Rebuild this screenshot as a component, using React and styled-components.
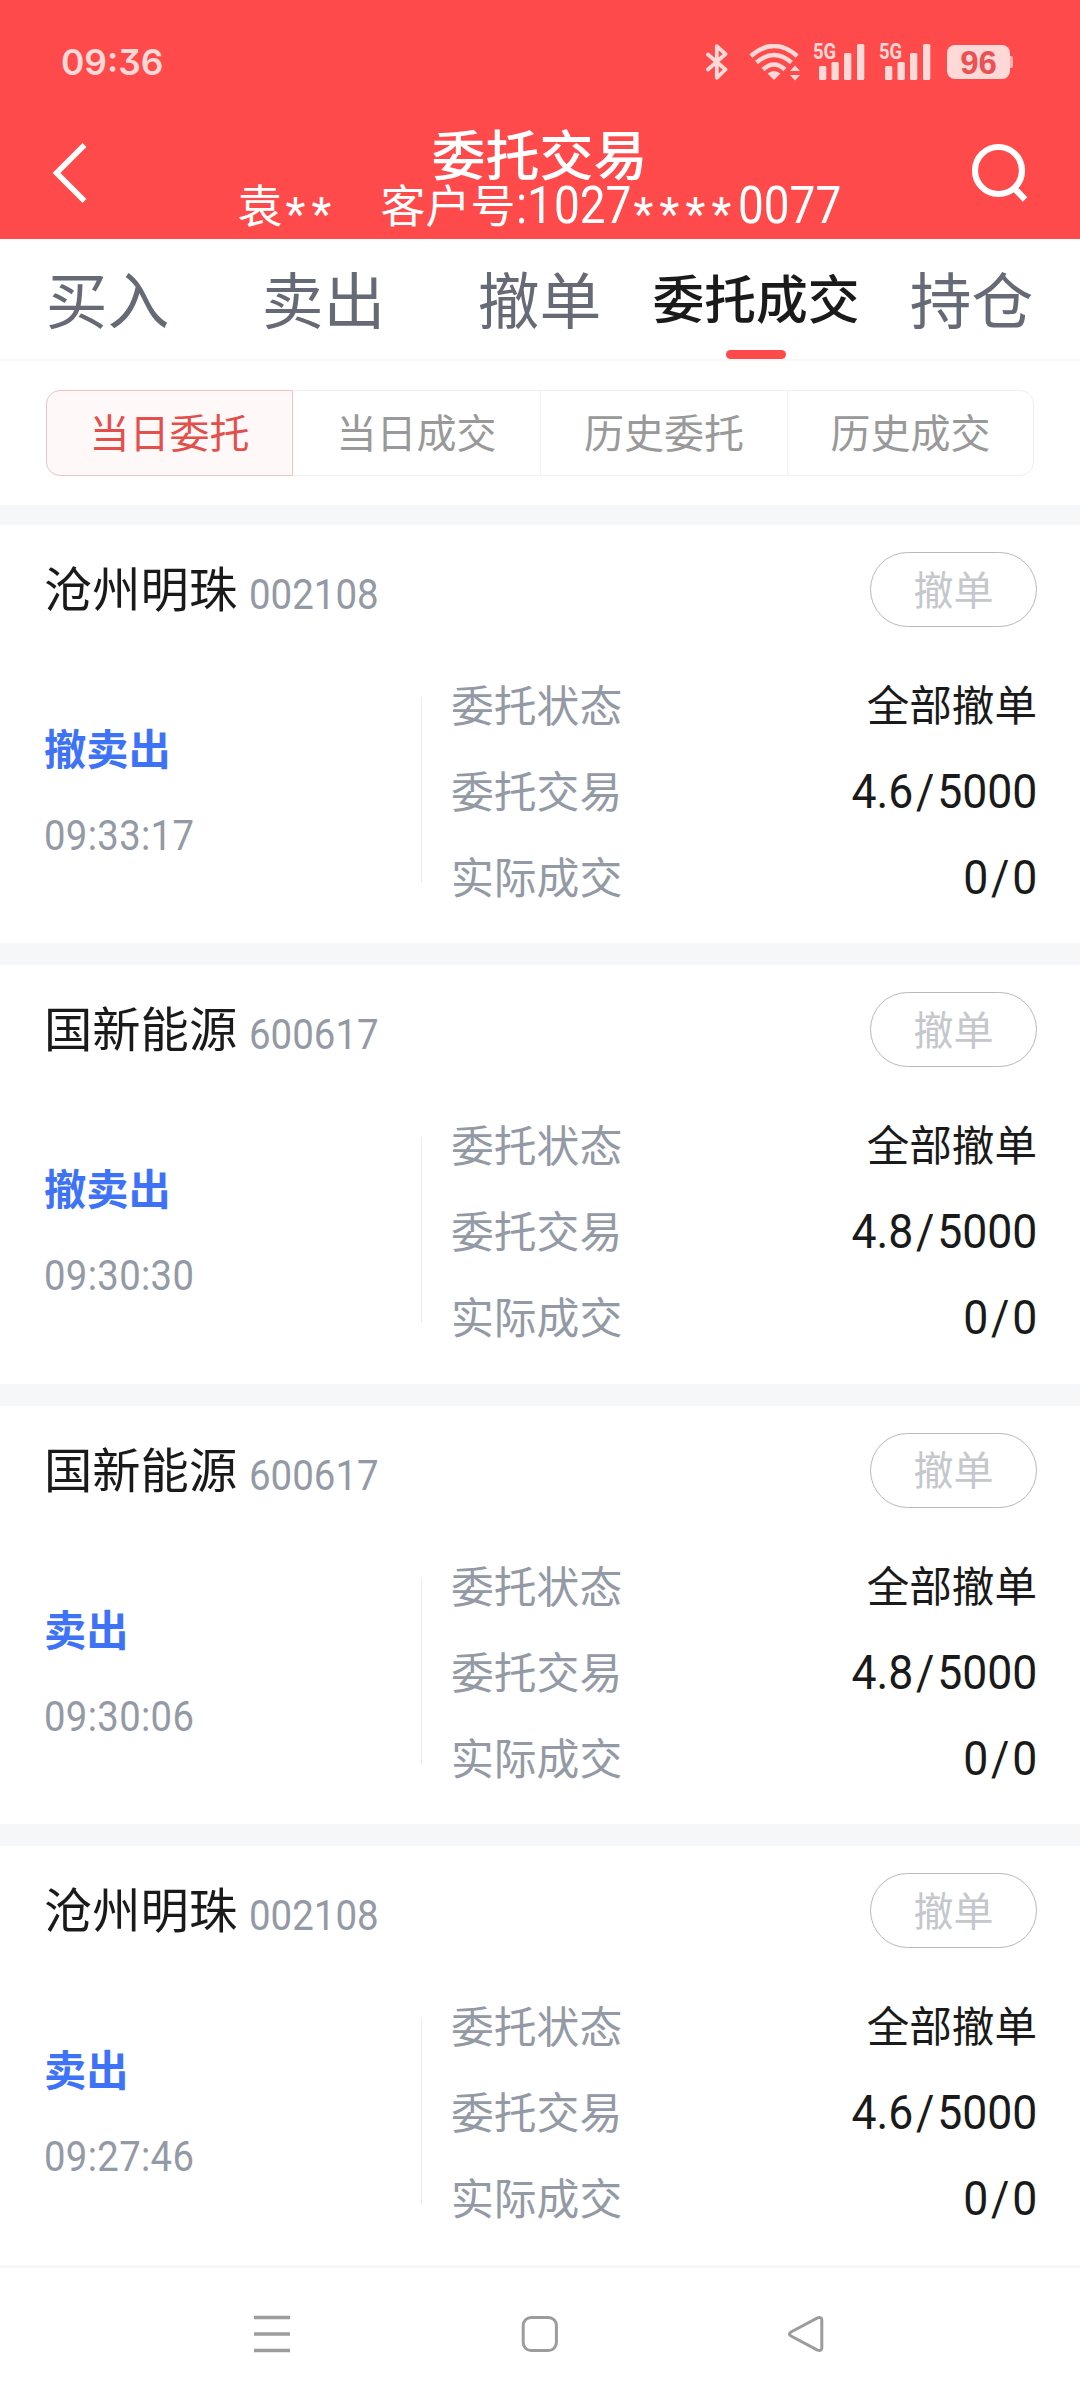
import React from "react";
import styled, { createGlobalStyle } from "styled-components";

const tabs = ["买入", "卖出", "撤单", "委托成交", "持仓"];
const segments = ["当日委托", "当日成交", "历史委托", "历史成交"];
const orders = [
  { id: 1, name: "沧州明珠", code: "002108", side: "撤卖出", time: "09:33:17", status: "全部撤单", order: "4.6/5000", deal: "0/0" },
  { id: 2, name: "国新能源", code: "600617", side: "撤卖出", time: "09:30:30", status: "全部撤单", order: "4.8/5000", deal: "0/0" },
  { id: 3, name: "国新能源", code: "600617", side: "卖出", time: "09:30:06", status: "全部撤单", order: "4.8/5000", deal: "0/0" },
  { id: 4, name: "沧州明珠", code: "002108", side: "卖出", time: "09:27:46", status: "全部撤单", order: "4.6/5000", deal: "0/0" },
];

const SignalIcon = () => (
  <Signal>
    <SignalLabel>5G</SignalLabel>
    <svg width="46" height="36" viewBox="0 0 46 36" fill="currentColor">
      <rect x="0" y="22" width="7.3" height="14" rx="1.5" />
      <rect x="12.5" y="18" width="7.3" height="18" rx="1.5" />
      <rect x="25" y="9" width="7.3" height="27" rx="1.5" />
      <rect x="38" y="0" width="7.3" height="36" rx="1.5" />
    </svg>
  </Signal>
);

const StatusBar = () => (
  <Status>
    <Clock>09:36</Clock>
    <StatusIcons>
      <svg width="22" height="36" viewBox="0 0 22 36" fill="none" stroke="currentColor" strokeWidth="3.8" strokeLinejoin="round" strokeLinecap="round">
        <path d="M2 10.5 L19.5 25.5 L10.8 33.8 V2.2 L19.5 10 L2 25.5" />
      </svg>
      <WifiIcon width="52" height="37" viewBox="0 0 52 37" fill="none" stroke="currentColor" strokeWidth="4.5">
        <path d="M1.8 12 Q25 -8 48.2 12" />
        <path d="M7.5 18.5 Q25 3.5 42.5 18.5" />
        <path d="M14 25.5 Q25 15.5 36 25.5" />
        <path d="M18.5 29.5 Q25 24.5 31.5 29.5 L25 36 Z" fill="currentColor" stroke="none" />
        <path d="M41 27 L46 21.5 L51 27 Z M41 31 L46 36.5 L51 31 Z" fill="currentColor" stroke="none" />
      </WifiIcon>
      <SignalIcon />
      <SignalIcon />
      <Battery>
        <BatteryBody>96</BatteryBody>
        <BatteryTip />
      </Battery>
    </StatusIcons>
  </Status>
);

const PriceAmount = ({ value }) => {
  const [left, right] = value.split("/");
  return (
    <NumberValue>
      {left}
      <Slash>/</Slash>
      {right}
    </NumberValue>
  );
};

const Order = ({ order }) => (
  <Card>
    <CardHead>
      <StockName>{order.name}</StockName>
      <StockCode>{order.code}</StockCode>
      <CancelButton>撤单</CancelButton>
    </CardHead>
    <CardBody>
      <Side>
        <SideName>{order.side}</SideName>
        <SideTime>{order.time}</SideTime>
      </Side>
      <Details>
        <DetailRow>
          <Label>委托状态</Label>
          <Value>{order.status}</Value>
        </DetailRow>
        <DetailRow>
          <Label>委托交易</Label>
          <PriceAmount value={order.order} />
        </DetailRow>
        <DetailRow>
          <Label>实际成交</Label>
          <PriceAmount value={order.deal} />
        </DetailRow>
      </Details>
    </CardBody>
  </Card>
);

const App = () => {
  return (
    <Page>
      <GlobalStyle />
      <Header>
        <StatusBar />
        <NavBar>
          <svg width="40" height="60" viewBox="0 0 40 60" fill="none" stroke="#fff" strokeWidth="5.5">
            <path d="M34.5 2 L6.5 30 L34.5 58" />
          </svg>
          <Titles>
            <Title>委托交易</Title>
            <Account>
              <AccountName>袁</AccountName>
              <Stars>**</Stars>
              <AccountLabel>客户号</AccountLabel>
              <Digits $width={38}>:1</Digits>
              <Digits $width={80}>027</Digits>
              <Stars>****</Stars>
              <Digits $width={104}>0077</Digits>
            </Account>
          </Titles>
          <svg width="58" height="60" viewBox="0 0 58 60" fill="none" stroke="#fff" strokeWidth="6.2">
            <circle cx="27.5" cy="27.5" r="23.5" />
            <path d="M43 45 L54 56.5" />
          </svg>
        </NavBar>
      </Header>
      <Tabs>
        {tabs.map((tab) => (
          <Tab key={tab} $active={tab === "委托成交"}>
            {tab}
          </Tab>
        ))}
      </Tabs>
      <SegmentBar>
        {segments.map((segment, index) => (
          <Segment key={segment} $active={index === 0}>
            {segment}
          </Segment>
        ))}
      </SegmentBar>
      <Orders>
        {orders.map((order) => (
          <Order key={order.id} order={order} />
        ))}
      </Orders>
      <SystemNav>
        <svg width="36" height="38" viewBox="0 0 36 38" stroke="#9c9c9c" strokeWidth="3.4">
          <path d="M0 2.5 H36 M0 19 H36 M0 35.5 H36" />
        </svg>
        <svg width="38" height="38" viewBox="0 0 38 38" fill="none" stroke="#9c9c9c" strokeWidth="3">
          <rect x="3.2" y="2.4" width="33.2" height="33.2" rx="8" />
        </svg>
        <svg width="38" height="38" viewBox="0 0 38 38" fill="none" stroke="#9c9c9c" strokeWidth="3" strokeLinejoin="round">
          <path d="M4 17 L30.5 2.9 Q34.8 1.6 34.8 5 V33 Q34.8 36.4 30.5 35.1 L4 21 Q1 19 4 17 Z" />
        </svg>
      </SystemNav>
    </Page>
  );
};

export default App;

const GlobalStyle = createGlobalStyle`
  body {
    margin: 0;
    background: #fff;
  }
  * {
    box-sizing: border-box;
  }
  svg {
    display: block;
    flex: none;
  }
`;

const Page = styled.div`
  width: 1080px;
  height: 2400px;
  display: flex;
  flex-direction: column;
  overflow: hidden;
  background: #fff;
  font-family: "Noto Sans CJK SC", sans-serif;
  font-weight: 400;
  white-space: nowrap;
`;

const Header = styled.header`
  height: 239px;
  flex: none;
  background: #ff4a4b;
  color: #fff;
`;

const Status = styled.div`
  height: 124px;
  padding: 0 67px 0 61px;
  display: flex;
  align-items: center;
  justify-content: space-between;
  color: #ffd8d8;
`;
const Clock = styled.div`
  font-family: Inter, sans-serif;
  font-feature-settings: "cv09";
  font-size: 35.4px;
  font-weight: 600;
`;
const StatusIcons = styled.div`
  display: flex;
  align-items: center;
`;
const WifiIcon = styled.svg`
  margin-left: 21px;
  margin-right: 12px;
`;
const Signal = styled.div`
  position: relative;
  width: 52px;
  margin-right: 14px;
  padding-left: 6px;
`;
const SignalLabel = styled.span`
  position: absolute;
  left: 0;
  top: -2px;
  font-family: Roboto, sans-serif;
  font-size: 22px;
  font-weight: 700;
  line-height: 20px;
  transform: scaleX(0.84);
  transform-origin: left;
`;
const Battery = styled.div`
  display: flex;
  align-items: center;
  margin-left: 2px;
`;
const BatteryBody = styled.div`
  width: 63px;
  height: 34px;
  border-radius: 8px;
  background: #ffd8d8;
  color: #ea5152;
  font-family: "Liberation Sans", sans-serif;
  font-size: 33px;
  font-weight: 700;
  line-height: 36px;
  text-align: center;
`;
const BatteryTip = styled.div`
  width: 3px;
  height: 12px;
  border-radius: 0 2px 2px 0;
  background: #ffb0b0;
`;

const NavBar = styled.div`
  height: 115px;
  padding: 0 51px 0 50px;
  display: flex;
  justify-content: space-between;
  align-items: flex-start;

  > svg {
    margin-top: 19px;
  }
`;
const Titles = styled.div`
  display: flex;
  flex-direction: column;
  align-items: center;
  padding-left: 18px;
`;
const Title = styled.h1`
  margin: 0;
  font-size: 54px;
  font-weight: 500;
  line-height: 57px;
`;
const Account = styled.div`
  height: 46px;
  display: flex;
  align-items: center;
  font-size: 45px;
  line-height: 46px;
`;
const AccountName = styled.span`
  margin-right: 3px;
  padding-bottom: 1px;
`;
const AccountLabel = styled.span`
  margin-left: 43px;
  padding-bottom: 1px;
`;
const Digits = styled.span`
  width: ${(props) => props.$width}px;
  padding-top: 3px;
  font-family: Roboto, sans-serif;
  font-size: 51px;
  transform: scaleX(0.9);
  transform-origin: left;
`;
const Stars = styled.span`
  font-family: Roboto, sans-serif;
  font-size: 46px;
  letter-spacing: 6.2px;
  padding-top: 19px;
`;

const Tabs = styled.nav`
  height: 122px;
  flex: none;
  display: grid;
  grid-template-columns: repeat(5, 1fr);
  border-bottom: 2px solid #f6f7f9;
`;
const Tab = styled.div`
  position: relative;
  padding-right: ${(props) => (props.$active ? "0" : "1px")};
  text-align: center;
  line-height: 116px;
  font-size: ${(props) => (props.$active ? "51.8px" : "61.8px")};
  font-weight: ${(props) => (props.$active ? 500 : 400)};
  color: ${(props) => (props.$active ? "#1a1a1a" : "#666a76")};

  &::after {
    content: "";
    display: ${(props) => (props.$active ? "block" : "none")};
    position: absolute;
    bottom: 0;
    left: 78px;
    width: 60px;
    height: 9px;
    border-radius: 5px;
    background: #ff4a4b;
  }
`;

const SegmentBar = styled.div`
  height: 144px;
  flex: none;
  padding: 29px 46px 0;
  display: grid;
  grid-template-columns: repeat(4, 1fr);
`;
const Segment = styled.div`
  height: 86px;
  border: 1px solid ${(props) => (props.$active ? "#edc4c6" : "#edeff1")};
  border-right-width: ${(props) => (props.$active ? "1px" : "0")};
  background: ${(props) => (props.$active ? "#fff8f8" : "#fff")};
  color: ${(props) => (props.$active ? "#e34f4b" : "#999")};
  font-size: 40px;
  line-height: 80px;
  text-align: center;

  &:first-child {
    border-radius: 14px 0 0 14px;
  }
  &:nth-child(2) {
    border-left-width: 0;
  }
  &:last-child {
    border-right-width: 1px;
    border-radius: 0 14px 14px 0;
  }
`;

const Orders = styled.main`
  height: 1760px;
  flex: none;
  overflow: hidden;
`;
const Card = styled.section`
  height: 440.4px;
  padding: 26px 43px 0 44px;
  border-top: 22px solid #f6f7f9;

  &:first-child {
    height: 438.4px;
    border-top-width: 20px;
  }
`;
const CardHead = styled.div`
  height: 77px;
  display: flex;
  align-items: center;
`;
const StockName = styled.div`
  padding-bottom: 6px;
  font-size: 48.3px;
  line-height: 69px;
  color: #1a1a1a;
`;
const StockCode = styled.div`
  margin: 10px 0 0 12px;
  font-family: Roboto, sans-serif;
  font-size: 42px;
  color: #949aa5;
  transform: scaleX(0.915);
  transform-origin: left;
`;
const CancelButton = styled.button`
  width: 167px;
  height: 75px;
  margin-left: auto;
  padding: 0 0 4px;
  border: 1px solid #b8b9bd;
  border-radius: 38px;
  background: none;
  color: #c5c7cd;
  font-family: inherit;
  font-size: 40px;
  line-height: 66px;
`;
const CardBody = styled.div`
  margin-top: 32px;
  display: flex;
  align-items: center;
`;
const Side = styled.div`
  width: 378px;
  height: 186px;
  margin-top: 2px;
  border-right: 1px solid #e8edf5;
`;
const SideName = styled.div`
  margin-top: 7px;
  font-size: 42.3px;
  font-weight: 700;
  line-height: 86px;
  color: #3f73f7;
`;
const SideTime = styled.div`
  margin-top: 3px;
  font-family: Roboto, sans-serif;
  font-size: 42px;
  letter-spacing: 0.4px;
  line-height: 86px;
  color: #949aa5;
  transform: scaleX(0.91);
  transform-origin: left;
`;
const Details = styled.div`
  flex: 1;
  padding-left: 29px;
`;
const DetailRow = styled.div`
  height: 86px;
  display: flex;
  align-items: center;
  justify-content: space-between;
  line-height: 86px;
`;
const Label = styled.div`
  font-size: 42.8px;
  color: #949aa5;
`;
const Value = styled.div`
  font-size: 42.6px;
  color: #1a1a1a;
`;
const NumberValue = styled.div`
  padding-top: 6px;
  font-family: Roboto, sans-serif;
  font-size: 49px;
  color: #1a1a1a;
  transform: scaleX(0.91);
  transform-origin: right;
`;
const Slash = styled.span`
  margin: 0 3px;
`;

const SystemNav = styled.footer`
  flex: 1;
  padding: 0 255px 0 254px;
  display: flex;
  align-items: center;
  justify-content: space-between;
  border-top: 3px solid #f7f7f7;
`;
